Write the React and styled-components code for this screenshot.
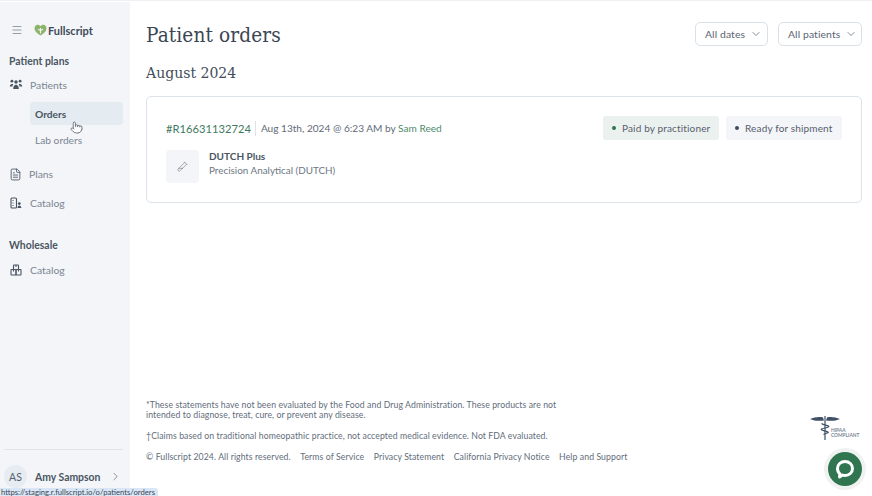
import React from "react";
import styled, { createGlobalStyle } from "styled-components";
import { ChevronDown, ChevronRight, Menu, FileText, TestTube2, Pointer } from "lucide-react";

const GlobalStyle = createGlobalStyle`
  html, body { margin: 0; padding: 0; height: 100%; background: #fff; overflow: hidden; }
  body { font-family: "Lato", "Open Sans", sans-serif; color: #4a5568; }
  a { text-decoration: none; color: inherit; }
`;

const Page = styled.div`
  position: relative;
  display: flex;
  width: 872px;
  height: 496px;
  overflow: hidden;
  padding-top: 1px;
  box-sizing: border-box;
  border-top: 1px solid #eef0f3;
`;

const Sidebar = styled.aside`
  width: 130px;
  flex: none;
  background: #f3f5f9;
  display: flex;
  flex-direction: column;
  padding: 0 7px 0 9px;
  box-sizing: border-box;
`;

const Brand = styled.div`
  display: flex;
  align-items: center;
  gap: 11px;
  height: 20px;
  margin-top: 18px;
  padding-left: 2px;
  color: #75808f;
`;

const Logo = styled.div`
  display: flex;
  align-items: center;
  gap: 1px;
  font-size: 11px;
  font-weight: 700;
  color: #3f4a58;
`;

const GroupTitle = styled.div`
  font-size: 10.4px;
  font-weight: 700;
  color: #4a5562;
  line-height: 14px;
  margin-top: ${({ $top }) => $top}px;
`;

const NavRow = styled.div`
  display: flex;
  align-items: center;
  gap: 7px;
  height: 16px;
  font-size: 10.4px;
  color: #7b8592;
  margin-top: ${({ $top }) => $top}px;
  svg { flex: none; color: #4a5562; }
`;

const SubItem = styled.div`
  height: 23px;
  display: flex;
  align-items: center;
  margin: ${({ $top }) => $top}px 0 0 21px;
  padding-left: 5px;
  border-radius: 4px;
  font-size: 10.2px;
  color: ${({ $active }) => ($active ? "#4a5562" : "#7b8592")};
  font-weight: ${({ $active }) => ($active ? 700 : 400)};
  background: ${({ $active }) => ($active ? "#e4ebf1" : "transparent")};
`;

const UserArea = styled.div`
  margin-top: auto;
  border-top: 1px solid #e0e4ea;
  margin-left: -5px;
  padding-top: 15px;
  height: 47px;
  box-sizing: border-box;
`;

const UserRow = styled.div`
  display: flex;
  align-items: center;
  gap: 8px;
  color: #4a5562;
  white-space: nowrap;
  svg { color: #75808f; margin-left: 1px; }
`;

const Avatar = styled.div`
  width: 23px;
  height: 23px;
  flex: none;
  border-radius: 50%;
  background: #e7ecf2;
  display: flex;
  align-items: center;
  justify-content: center;
  font-size: 10.5px;
  color: #55606d;
`;

const UserName = styled.span`
  font-size: 10.4px;
  font-weight: 700;
`;

const Main = styled.main`
  flex: 1;
  display: flex;
  flex-direction: column;
  padding: 0 10px 0 16px;
  min-width: 0;
`;

const TitleRow = styled.div`
  display: flex;
  justify-content: space-between;
  align-items: center;
  margin-top: 20px;
  height: 26px;
`;

const Title = styled.h1`
  margin: 0;
  font-family: "DejaVu Serif", serif;
  font-stretch: condensed;
  font-weight: 400;
  font-size: 20.6px;
  letter-spacing: 0.1px;
  color: #3b4654;
`;

const Filters = styled.div`
  display: flex;
  gap: 10px;
  margin-top: -2px;
`;

const FilterButton = styled.button`
  height: 24px;
  padding: 0 0 0 9px;
  background: #fff;
  border: 1px solid #d9e0e8;
  border-radius: 5px;
  display: inline-flex;
  align-items: center;
  gap: 5px;
  font-family: inherit;
  font-size: 10.4px;
  letter-spacing: 0.1px;
  white-space: nowrap;
  color: #5a6572;
  width: ${({ $w }) => $w}px;
  box-sizing: border-box;
  svg { flex: none; }
`;

const Month = styled.h2`
  margin: 17px 0 0;
  font-family: "DejaVu Serif", serif;
  font-stretch: condensed;
  font-weight: 400;
  font-size: 15.6px;
  line-height: 16px;
  color: #434d5a;
`;

const OrderCard = styled.section`
  margin-top: 15px;
  height: 107px;
  box-sizing: border-box;
  border: 1px solid #dde3ea;
  border-radius: 5px;
  padding: 19px 19px 0 19px;
`;

const OrderHead = styled.div`
  display: flex;
  align-items: center;
  justify-content: space-between;
  height: 24px;
`;

const OrderMeta = styled.div`
  display: flex;
  align-items: center;
  font-size: 10.1px;
  color: #5f6a77;
  white-space: pre;
`;

const OrderNumber = styled.a`
  font-size: 11.2px;
  color: #3f7a5e;
  padding-right: 4px;
  margin-right: 5px;
  border-right: 1px solid #dfe3e8;
  line-height: 15px;
`;

const GreenLink = styled.a`
  color: #4f8a6d;
`;

const Tags = styled.div`
  display: flex;
  gap: 7px;
`;

const Tag = styled.div`
  height: 24px;
  width: 116px;
  box-sizing: border-box;
  padding-left: 9px;
  border-radius: 3px;
  display: flex;
  align-items: center;
  gap: 6px;
  font-size: 10px;
  color: #55606d;
  letter-spacing: 0.15px;
  white-space: nowrap;
  background: ${({ $paid }) => ($paid ? "#ebf1ef" : "#f3f5f9")};
`;

const Dot = styled.span`
  width: 4px;
  height: 4px;
  flex: none;
  border-radius: 50%;
  background: ${({ $paid }) => ($paid ? "#2f7550" : "#3f4a5c")};
`;

const Product = styled.div`
  display: flex;
  align-items: flex-start;
  gap: 10px;
  margin-top: 10px;
`;

const Thumb = styled.div`
  width: 33px;
  height: 33px;
  border-radius: 4px;
  background: #f3f5f9;
  display: flex;
  align-items: center;
  justify-content: center;
  color: #6d7783;
`;

const ProductText = styled.div`
  margin-top: -1px;
`;

const ProductName = styled.div`
  font-size: 10px;
  font-weight: 700;
  color: #4a5562;
  line-height: 14px;
`;

const ProductBrand = styled.div`
  font-size: 9.9px;
  color: #6d7783;
  line-height: 14px;
`;

const Footer = styled.footer`
  margin-top: auto;
  padding-bottom: 34px;
  font-size: 8.7px;
  line-height: 10px;
  color: #626d7a;
  letter-spacing: 0.09px;
`;

const Note = styled.p`
  margin: 0 0 ${({ $bottom }) => $bottom}px;
`;

const FooterLinks = styled.div`
  display: flex;
  gap: 9.5px;
`;

const HipaaBadge = styled.div`
  position: absolute;
  right: 12px;
  top: 413px;
  width: 50px;
  height: 28px;
  color: #3f4f66;
`;

const HipaaText = styled.span`
  position: absolute;
  left: 21px;
  top: 14px;
  font-size: 4.8px;
  line-height: 5px;
  font-weight: 700;
  color: #7a8594;
`;

const ChatBubble = styled.button`
  position: absolute;
  right: 10px;
  top: 451px;
  width: 34px;
  height: 34px;
  padding: 0;
  border: none;
  border-radius: 50%;
  background: #2f7550;
  box-shadow: 0 0 0 4px #f0f2f2;
  display: flex;
  align-items: center;
  justify-content: center;
`;

const HandCursor = styled.div`
  position: absolute;
  left: 70px;
  top: 120px;
  width: 12px;
  height: 14px;
  color: #4a5562;
  svg { display: block; fill: #fff; }
`;

const StatusUrl = styled.div`
  position: absolute;
  left: 0;
  bottom: 0;
  height: 8px;
  padding: 0 3px 0 1px;
  background: #d8e6f8;
  border-top-right-radius: 3px;
  font-size: 7.7px;
  line-height: 9px;
  color: #3c4650;
  white-space: nowrap;
`;

const PatientsIcon = () => (
  <svg width="14" height="14" viewBox="0 0 14 14" fill="currentColor">
    <circle cx="7" cy="4" r="1.7" />
    <circle cx="2.9" cy="3.2" r="1.4" />
    <circle cx="11.1" cy="3.2" r="1.4" />
    <path d="M.8 8.5c0-1.600 1-2.600 2.200-2.600.6 0 1 .2 1.300.4-.5.500-.8 1.300-.8 2.200zM13.200 8.500c0-1.600-1-2.600-2.200-2.600-.6 0-1 .2-1.300.4.500.5.800 1.300.8 2.200z" />
    <path d="M4.200 11c0-2.400 1.100-4.300 2.800-4.300s2.800 1.900 2.800 4.300z" />
  </svg>
);

const CatalogIcon = () => (
  <svg width="14" height="14" viewBox="0 0 14 14" fill="none" stroke="currentColor" strokeWidth="1.1">
    <rect x="2" y="2" width="5.5" height="10" rx="1" />
    <path d="M3.500 4.500h1M3.500 7h1M3.500 9.500h1" />
    <circle cx="10.3" cy="7.6" r="1.4" fill="currentColor" stroke="none" />
    <path d="M8.500 12c0-1.400.8-2.500 1.800-2.500s2 1.100 2 2.500z" fill="currentColor" stroke="none" />
  </svg>
);

const WholesaleIcon = () => (
  <svg width="14" height="14" viewBox="0 0 14 14" fill="none" stroke="currentColor" strokeWidth="1.1">
    <rect x="4.5" y="2" width="5" height="4.5" rx=".6" />
    <rect x="2" y="6.5" width="5" height="5.5" rx=".6" />
    <rect x="7" y="6.5" width="5" height="5.5" rx=".6" />
    <path d="M7 2v2M4.500 6.500v2M9.500 6.500v2" />
  </svg>
);

const LogoMark = () => (
  <svg width="13" height="12" viewBox="0 0 13 12">
    <path d="M6.500 11.500C2.500 9 .5 6.800.5 4.200.5 2.200 2 .8 3.800.8c1.200 0 2.200.6 2.700 1.500C7 1.400 8 .8 9.200.8c1.800 0 3.300 1.400 3.300 3.400 0 2.600-2 4.800-6 7.300z" fill="#8cb56a" />
    <path d="M6.500 9.500V4M4 5.500c1 0 2.500.6 2.500 2 0-1.400 1.500-2 2.500-2" stroke="#f3f5f9" strokeWidth="1.1" fill="none" />
  </svg>
);

const Caduceus = () => (
  <svg width="30" height="28" viewBox="0 0 30 28" fill="none">
    <path d="M0 5c4-1.500 9-2.500 13-1.500l1 3C9.500 7 4 7 0 5zM30 5c-4-1.500-9-2.500-13-1.500l-1 3c4.500.5 10 .5 14-1.500z" fill="currentColor" />
    <path d="M15 2v24" stroke="currentColor" strokeWidth="1.2" />
    <path d="M11.500 9.500c2 1.500 5 1.500 7 2.500s-5 2-7 3 5 2 6.500 3-3 1.500-4.500 2.500" stroke="currentColor" strokeWidth="1.1" />
  </svg>
);

const App = () => (
  <Page>
    <GlobalStyle />
    <Sidebar>
      <Brand>
        <Menu size={12} strokeWidth={1.5} />
        <Logo>
          <LogoMark />
          Fullscript
        </Logo>
      </Brand>
      <GroupTitle $top={14}>Patient plans</GroupTitle>
      <NavRow $top={9}>
        <PatientsIcon />
        Patients
      </NavRow>
      <SubItem $active $top={9}>Orders</SubItem>
      <SubItem $top={3}>Lab orders</SubItem>
      <NavRow $top={15}>
        <FileText size={13} strokeWidth={1.6} />
        Plans
      </NavRow>
      <NavRow $top={13}>
        <CatalogIcon />
        Catalog
      </NavRow>
      <GroupTitle $top={27}>Wholesale</GroupTitle>
      <NavRow $top={10}>
        <WholesaleIcon />
        Catalog
      </NavRow>
      <UserArea>
        <UserRow>
          <Avatar>AS</Avatar>
          <UserName>Amy Sampson</UserName>
          <ChevronRight size={13} strokeWidth={1.6} />
        </UserRow>
      </UserArea>
    </Sidebar>
    <Main>
      <TitleRow>
        <Title>Patient orders</Title>
        <Filters>
          <FilterButton $w={73}>All dates <ChevronDown size={12} strokeWidth={1.5} /></FilterButton>
          <FilterButton $w={84}>All patients <ChevronDown size={12} strokeWidth={1.5} /></FilterButton>
        </Filters>
      </TitleRow>
      <Month>August 2024</Month>
      <OrderCard>
        <OrderHead>
          <OrderMeta>
            <OrderNumber>#R16631132724</OrderNumber>
            {"Aug 13th, 2024 @ 6:23 AM by "}<GreenLink>Sam Reed</GreenLink>
          </OrderMeta>
          <Tags>
            <Tag $paid><Dot $paid />Paid by practitioner</Tag>
            <Tag><Dot />Ready for shipment</Tag>
          </Tags>
        </OrderHead>
        <Product>
          <Thumb><TestTube2 size={11} strokeWidth={1.3} /></Thumb>
          <ProductText>
            <ProductName>DUTCH Plus</ProductName>
            <ProductBrand>Precision Analytical (DUTCH)</ProductBrand>
          </ProductText>
        </Product>
      </OrderCard>
      <Footer>
        <Note $bottom={0}>*These statements have not been evaluated by the Food and Drug Administration. These products are not</Note>
        <Note $bottom={11}>intended to diagnose, treat, cure, or prevent any disease.</Note>
        <Note $bottom={11}>†Claims based on traditional homeopathic practice, not accepted medical evidence. Not FDA evaluated.</Note>
        <FooterLinks>
          <span>© Fullscript 2024. All rights reserved.</span>
          <a>Terms of Service</a>
          <a>Privacy Statement</a>
          <a>California Privacy Notice</a>
          <a>Help and Support</a>
        </FooterLinks>
      </Footer>
    </Main>
    <HandCursor><Pointer size={13} strokeWidth={1.4} /></HandCursor>
    <HipaaBadge>
      <Caduceus />
      <HipaaText>HIPAA<br />COMPLIANT</HipaaText>
    </HipaaBadge>
    <ChatBubble>
      <svg width="22" height="22" viewBox="0 0 22 22">
        <path d="M11 3.500c4.300 0 7.500 3 7.500 7s-3.200 7-7.500 7c-.9 0-1.700-.1-2.500-.4L5.500 19l.4-3.200C4.300 14.500 3.500 12.700 3.500 10.500c0-4 3.200-7 7.500-7z" fill="none" stroke="#fff" strokeWidth="3" strokeLinejoin="round" />
      </svg>
    </ChatBubble>
    <StatusUrl>https://staging.r.fullscript.io/o/patients/orders</StatusUrl>
  </Page>
);

export default App;
